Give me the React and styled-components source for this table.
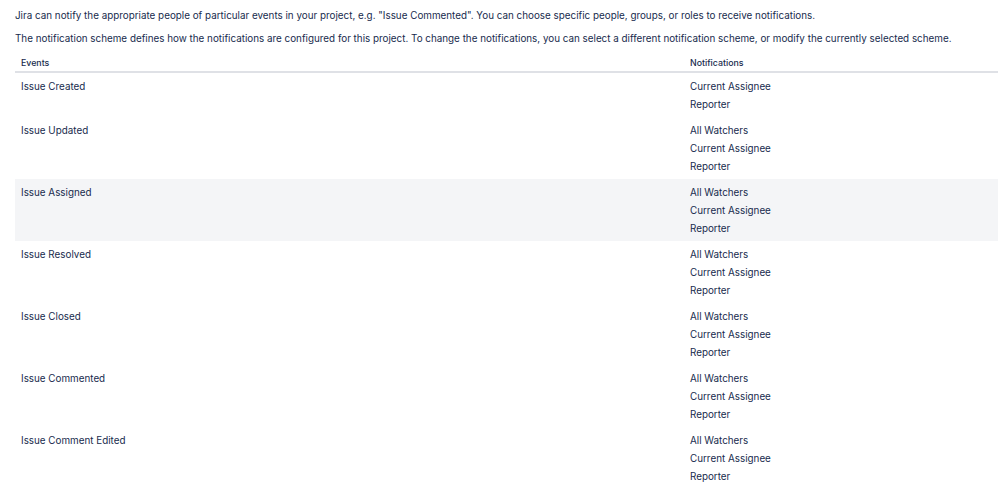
import React from 'react'
import styled, { createGlobalStyle } from 'styled-components'

const GlobalStyle = createGlobalStyle`
    body {
        margin: 0;
        background: #fff;
        font-family: Inter, "Noto Sans", "Liberation Sans", sans-serif;
        color: #172b4d;
    }
`

const Page = styled.div`
    padding: 0 0 0 15px;
`

const Intro = styled.p`
    margin: ${props => props.first ? '5px' : '3px'} 0 0;
    font-size: 9.85px;
    line-height: 20px;
`

const Table = styled.table`
    width: 100%;
    margin-top: 5px;
    border-collapse: collapse;
    table-layout: fixed;
`

const HeadCell = styled.th`
    box-sizing: border-box;
    text-align: left;
    font-size: 8.8px;
    font-weight: 500;
    line-height: 12px;
    padding: 4px 6px 2px;
    border-bottom: 2px solid #dfe1e6;
    width: ${props => props.wide ? '669px' : 'auto'};
`

const Row = styled.tr`
    background: ${props => props.highlight ? '#f4f5f7' : 'transparent'};
`

const Cell = styled.td`
    vertical-align: top;
    font-size: 9.85px;
    line-height: 18px;
    padding: 4px 6px;
`

const NotifyList = styled.ul`
    list-style: none;
    margin: 0;
    padding: 0;
`

const events = [
    { name: 'Issue Created', notify: ['Current Assignee', 'Reporter'] },
    { name: 'Issue Updated', notify: ['All Watchers', 'Current Assignee', 'Reporter'] },
    { name: 'Issue Assigned', notify: ['All Watchers', 'Current Assignee', 'Reporter'], highlight: true },
    { name: 'Issue Resolved', notify: ['All Watchers', 'Current Assignee', 'Reporter'] },
    { name: 'Issue Closed', notify: ['All Watchers', 'Current Assignee', 'Reporter'] },
    { name: 'Issue Commented', notify: ['All Watchers', 'Current Assignee', 'Reporter'] },
    { name: 'Issue Comment Edited', notify: ['All Watchers', 'Current Assignee', 'Reporter'] },
]

export default function App() {
    return <Page>
        <GlobalStyle />
        <Intro first>Jira can notify the appropriate people of particular events in your project, e.g. "Issue Commented". You can choose specific people, groups, or roles to receive notifications.</Intro>
        <Intro>The notification scheme defines how the notifications are configured for this project. To change the notifications, you can select a different notification scheme, or modify the currently selected scheme.</Intro>
        <Table>
            <thead>
                <tr>
                    <HeadCell wide>Events</HeadCell>
                    <HeadCell>Notifications</HeadCell>
                </tr>
            </thead>
            <tbody>
                {events.map(ev => (
                    <Row key={ev.name} highlight={ev.highlight}>
                        <Cell>{ev.name}</Cell>
                        <Cell>
                            <NotifyList>
                                {ev.notify.map(n => <li key={n}>{n}</li>)}
                            </NotifyList>
                        </Cell>
                    </Row>
                ))}
            </tbody>
        </Table>
    </Page>
}
